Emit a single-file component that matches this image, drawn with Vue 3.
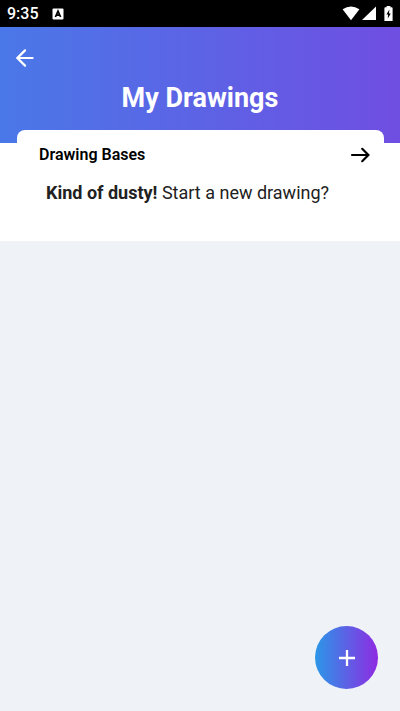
<script setup>
const title = 'My Drawings'
const section = 'Drawing Bases'
</script>

<template>
  <div class="screen">
    <div class="status">
      <span class="time">9:35</span>
      <svg class="badge" viewBox="0 0 12 12" aria-hidden="true">
        <rect x="0.5" y="0.5" width="11" height="11" rx="1" fill="#fff" />
        <path d="M3.4 9 6 3.2 8.6 9M4.4 7.2H7.6" fill="none" stroke="#000" stroke-width="1.7" />
      </svg>
      <div class="signals">
        <svg width="18" height="15" viewBox="0 0 18 15" aria-hidden="true">
          <path d="M0.6 3.2Q9-2.4 17.4 3.2L9 14.2Z" fill="#fff" />
        </svg>
        <svg width="14" height="15" viewBox="0 0 14 15" aria-hidden="true">
          <path d="M14 0.4V14H0Z" fill="#fff" />
        </svg>
        <svg class="battery" width="9" height="15" viewBox="0 0 9 15" aria-hidden="true">
          <path d="M2.6 0H6.4V1.2H7.6Q8.6 1.2 8.6 2.2V15H0.4V2.2Q0.4 1.2 1.4 1.2H2.6Z" fill="#fff" />
          <path d="M5.4 3.6 2.4 8.6H4.1L3.8 12.6 6.8 7.4H5Z" fill="#000" />
        </svg>
      </div>
    </div>

    <header class="header">
      <button class="icon-button back" type="button" aria-label="Back">
        <svg width="18" height="18" viewBox="0 0 18 18" aria-hidden="true">
          <path d="M9 1.4 1.4 9 9 16.6M1.4 9H16.6" />
        </svg>
      </button>
      <h1 class="title">{{ title }}</h1>
    </header>

    <main class="panel">
      <section class="card">
        <div class="card-head">
          <h2 class="card-title">{{ section }}</h2>
          <button class="icon-button next" type="button" aria-label="Open Drawing Bases">
            <svg width="20" height="16" viewBox="0 0 20 16" aria-hidden="true">
              <path d="M12.2 1.8 18.4 8 12.2 14.2M2 8H18.4" />
            </svg>
          </button>
        </div>
        <p class="message"><strong>Kind of dusty!</strong> Start a new drawing?</p>
      </section>
    </main>

    <button class="fab" type="button" aria-label="New drawing">
      <svg width="18" height="18" viewBox="0 0 18 18" aria-hidden="true">
        <path d="M9 1V17M1 9H17" fill="none" stroke="#fff" stroke-width="2.3" />
      </svg>
    </button>
  </div>
</template>

<style>
body {
  background: #eff3f8;
}
</style>

<style scoped>
.screen {
  min-height: 100vh;
  background: #eff3f8;
  font-family: Roboto, "Liberation Sans", sans-serif;
  color: #212121;
}

.status {
  display: flex;
  align-items: center;
  height: 27px;
  padding: 0 7px;
  background: #000;
  color: #fff;
}

.time {
  font-size: 16px;
  font-weight: 500;
  line-height: 27px;
}

.badge {
  width: 12px;
  height: 12px;
  margin-left: 13px;
}

.signals {
  display: flex;
  align-items: center;
  gap: 2px;
  margin-left: auto;
}

.battery {
  margin-left: 6px;
}

.header {
  height: 116px;
  box-sizing: border-box;
  padding-top: 22px;
  background: linear-gradient(90deg, #4a78e8, #6f4ee2);
}

.icon-button {
  display: flex;
  padding: 0;
  border: 0;
  background: none;
}

.icon-button path {
  fill: none;
  stroke: currentColor;
  stroke-width: 2.2;
  stroke-linecap: round;
}

.back {
  margin-left: 16px;
  color: #fff;
}

.title {
  margin: 15px 0 0;
  color: #fff;
  font-size: 27px;
  font-weight: 700;
  line-height: 32px;
  text-align: center;
}

.panel {
  display: flow-root;
  padding: 0 16px 0 17px;
  background: #fff;
}

.card {
  margin-top: -13px;
  padding: 14px 14px 36px 22px;
  border-radius: 8px;
  background: #fff;
}

.card-head {
  display: flex;
  align-items: center;
  justify-content: space-between;
  height: 22px;
}

.card-title {
  margin: 0;
  color: #000;
  font-size: 16px;
  font-weight: 600;
  line-height: 22px;
}

.next {
  color: #000;
}

.message {
  margin: 15px 0 0;
  padding-left: 7px;
  font-size: 18px;
  line-height: 24px;
}

.fab {
  position: fixed;
  right: 22px;
  bottom: 22px;
  display: flex;
  align-items: center;
  justify-content: center;
  width: 63px;
  height: 63px;
  padding: 0;
  border: 0;
  border-radius: 50%;
  background: linear-gradient(90deg, #2b97e8, #8e2be2);
}
</style>
